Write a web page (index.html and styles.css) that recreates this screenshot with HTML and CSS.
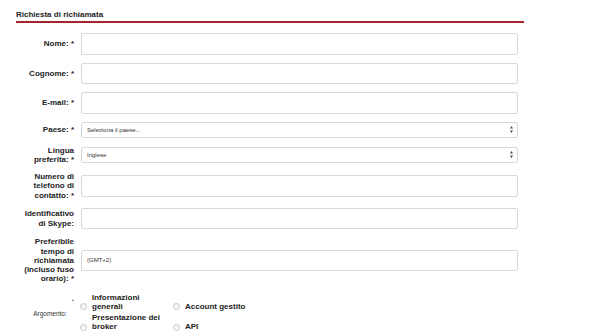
FILE: index.html
```html
<!DOCTYPE html>
<html lang="it">
<head>
  <meta charset="UTF-8">
  <meta name="viewport" content="width=device-width, initial-scale=1.0">
  <title>Richiesta di richiamata</title>
  <link rel="stylesheet" href="styles.css">
</head>
<body>
  <div class="callback">
    <h2 class="callback-title">Richiesta di richiamata</h2>

    <form class="callback-form">
      <div class="row">
        <label class="label" for="nome">Nome: *</label>
        <input class="field" id="nome" type="text">
      </div>
      <div class="row">
        <label class="label" for="cognome">Cognome: *</label>
        <input class="field" id="cognome" type="text">
      </div>
      <div class="row">
        <label class="label" for="email">E-mail: *</label>
        <input class="field" id="email" type="text">
      </div>
      <div class="row">
        <label class="label" for="paese">Paese: *</label>
        <select class="field select" id="paese">
          <option>Seleziona il paese...</option>
        </select>
      </div>
      <div class="row">
        <label class="label" for="lingua">Lingua<br>preferita: *</label>
        <select class="field select" id="lingua">
          <option>Inglese</option>
        </select>
      </div>
      <div class="row">
        <label class="label" for="telefono">Numero di<br>telefono di<br>contatto: *</label>
        <input class="field" id="telefono" type="text">
      </div>
      <div class="row">
        <label class="label" for="skype">Identificativo<br>di Skype:</label>
        <input class="field" id="skype" type="text">
      </div>
      <div class="row">
        <label class="label" for="tempo">Preferibile<br>tempo di<br>richiamata<br>(incluso fuso<br>orario): *</label>
        <input class="field" id="tempo" type="text" value="(GMT+2)">
      </div>

      <div class="row row-topic">
        <div class="label label-topic">
          <span>Argomento:</span>
          <span class="dot">.</span>
        </div>
        <div class="topics">
          <label class="topic"><span class="radio"></span><span>Informazioni generali</span></label>
          <label class="topic"><span class="radio"></span><span>Account gestito</span></label>
          <label class="topic"><span class="radio"></span><span>Presentazione dei broker</span></label>
          <label class="topic"><span class="radio"></span><span>API</span></label>
        </div>
      </div>
    </form>
  </div>
</body>
</html>
```

FILE: styles.css
```css
body {
  margin: 0;
  padding: 0;
  background: #fff;
  font-family: "Liberation Sans", Arial, sans-serif;
  color: #222;
}

.callback {
  width: 508px;
  padding: 10px 0 0 16px;
}

.callback-title {
  margin: 0;
  font-size: 8px;
  line-height: 10px;
  font-weight: bold;
  padding-bottom: 1px;
  border-bottom: 2px solid #a3252f;
}

.callback-form {
  display: flex;
  flex-direction: column;
  gap: 8px;
  margin-top: 10px;
  width: 502px;
}

.row {
  display: flex;
  align-items: center;
  gap: 7px;
}

.label {
  flex: 0 0 58px;
  text-align: right;
  font-size: 8px;
  line-height: 9.25px;
  font-weight: bold;
  color: #222;
}

.field {
  flex: 1;
  box-sizing: border-box;
  height: 21.5px;
  margin: 0;
  padding: 0 5px;
  border: 1px solid #d8d8d8;
  border-radius: 2px;
  background: #fff;
  font-family: "Liberation Sans", Arial, sans-serif;
  font-size: 6px;
  color: #333;
  outline: none;
}

.select {
  height: 16px;
  appearance: none;
  -webkit-appearance: none;
  padding: 0 12px 0 5px;
  background: #fff url("data:image/svg+xml,%3Csvg xmlns='http://www.w3.org/2000/svg' width='3' height='7' viewBox='0 0 3 7'%3E%3Cpath d='M1.5 0L3 2.6H0z M1.5 7L3 4.4H0z' fill='%23444'/%3E%3C/svg%3E") no-repeat right 4px center;
}

.row-topic {
  margin-top: 1px;
  align-items: stretch;
}

.label-topic {
  display: flex;
  justify-content: flex-end;
  align-items: center;
  padding-top: 3px;
  font-weight: normal;
  font-size: 6.5px;
  color: #333;
}

.label-topic .dot {
  align-self: flex-start;
  margin: 0 0 0 5px;
  font-size: 8px;
  line-height: 6px;
  font-weight: bold;
}

.topics {
  display: grid;
  grid-template-columns: 93px 93px;
  align-items: end;
  row-gap: 2px;
  margin-left: -1px;
}

.topic {
  display: flex;
  align-items: flex-end;
  gap: 5px;
  font-size: 8px;
  line-height: 9.25px;
  font-weight: bold;
  color: #222;
}

.topic span:last-child {
  max-width: 72px;
}

.radio {
  flex: 0 0 auto;
  box-sizing: border-box;
  width: 7px;
  height: 7px;
  margin-bottom: 1px;
  border: 1px solid #c4c4c4;
  border-radius: 50%;
  background: linear-gradient(#f2f2f2, #fff);
}
```
